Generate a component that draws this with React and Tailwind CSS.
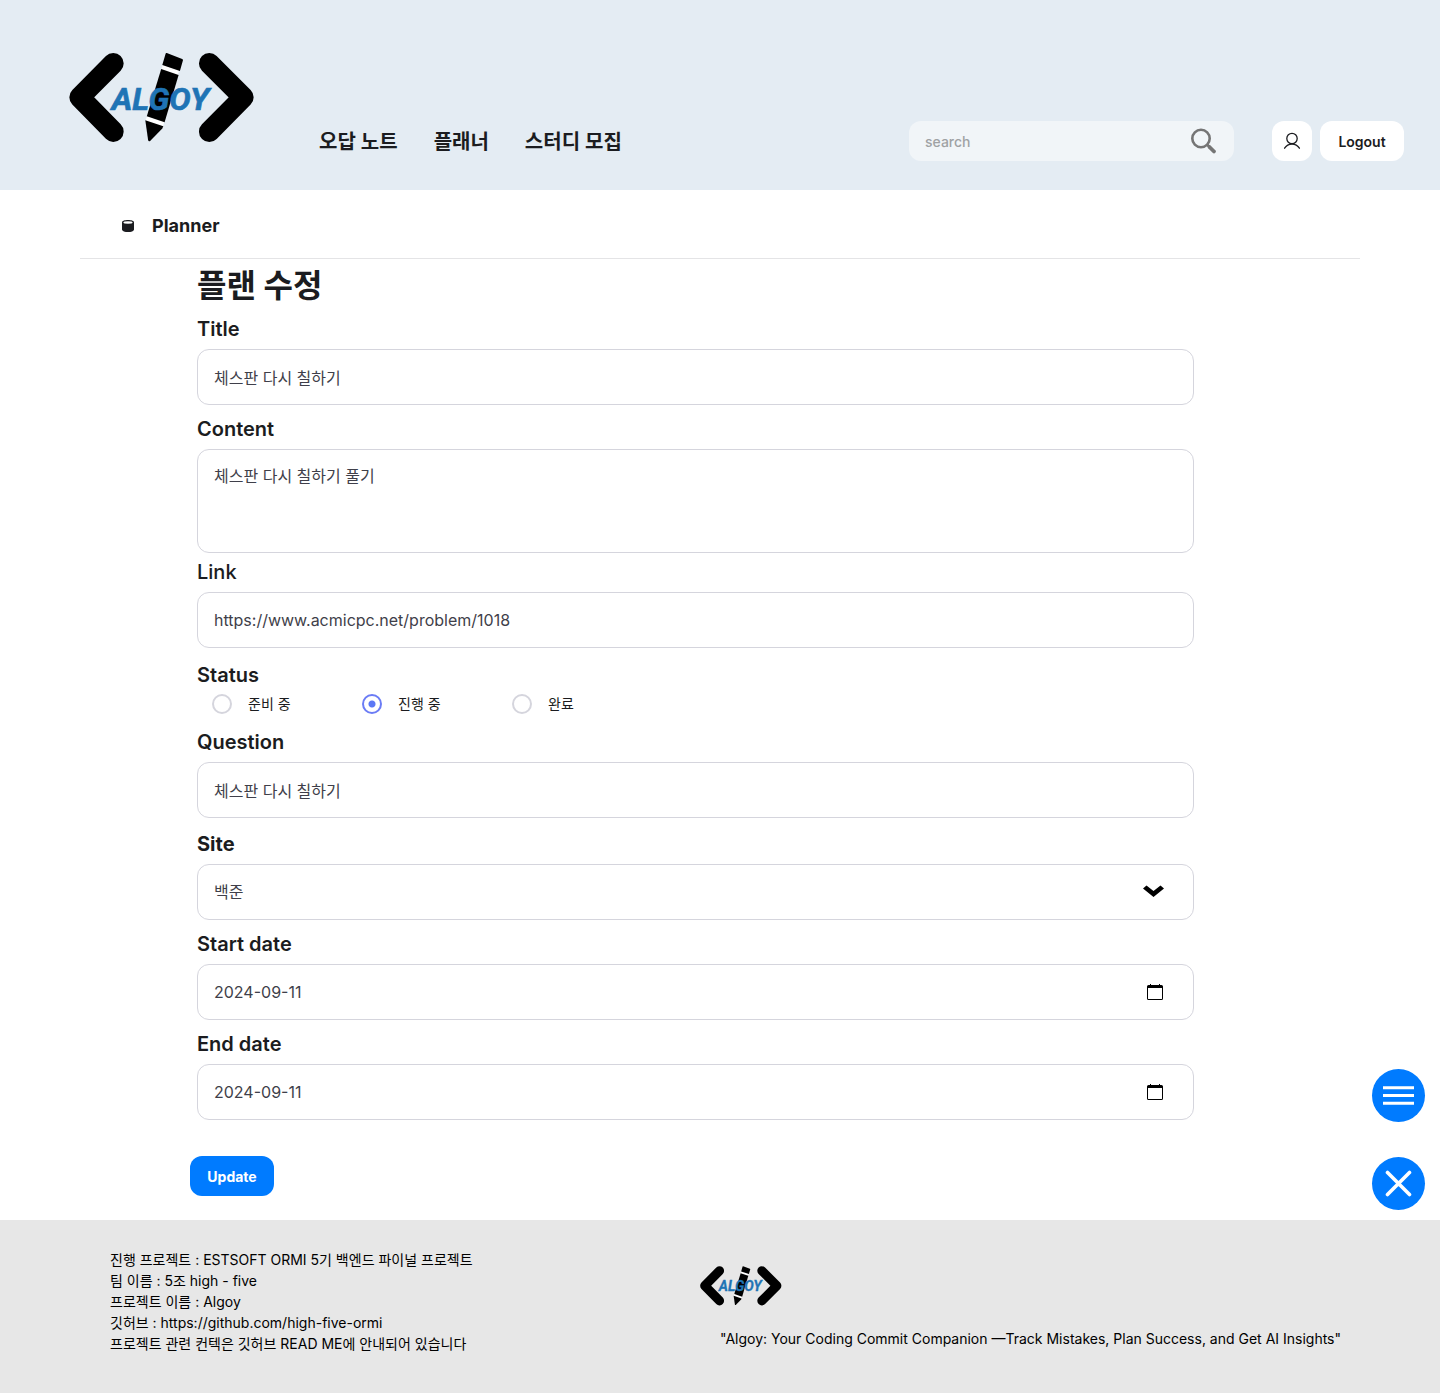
import React from "react";

const inputBase =
  "block w-full rounded-xl border border-[#d5d5dd] bg-white px-4 text-base leading-6 text-[#3f3f4a] outline-none focus:border-[#5c73f2]";

function Logo({ className }) {
  return (
    <svg viewBox="0 0 186 90" className={className} role="img" aria-label="Algoy">
      <g transform="translate(-9 -13)">
        <g fill="none" stroke="#000" strokeWidth="20.7" strokeLinecap="round" strokeLinejoin="round">
          <path d="M53.3 23.4 19.7 57.3l33.6 34.3" />
          <path d="M149.3 23.4l34 33.9-34 34.3" />
        </g>
        <path d="M106 14.500 122 20 103 86 90 100 86 79.5Z" fill="#fff" />
        <path d="M106.8 13q-.9-.2-1.200.8L102.300 25l17.600 6 3-10.600q.3-1-.7-1.400Z" />
        <path d="M101.200 29l17.400 6-14 47.300-17.800-6Z" />
        <path d="M85.300 80.200l18 6-1 2.200-12.200 12.500q-1.600.8-2-1Z" />
        <text
          x="51.500"
          y="70.200"
          fontFamily="Roboto, sans-serif"
          fontSize="32"
          fontWeight="700"
          fontStyle="italic"
          fill="#1f74b5"
          stroke="#1f74b5"
          strokeWidth="0.6"
        >
          ALGOY
        </text>
      </g>
    </svg>
  );
}

function CalendarIcon() {
  return (
    <svg viewBox="0 0 16 16" className="size-4" aria-hidden="true">
      <path d="M3 0h1v1h8V0h1v1h1.500A1.500 1.500 0 0 1 16 2.500v12a1.500 1.500 0 0 1-1.500 1.500h-13A1.500 1.500 0 0 1 0 14.500v-12A1.500 1.500 0 0 1 1.500 1H3ZM1 4v10.500a.5.5 0 0 0 .5.5h13a.5.5 0 0 0 .5-.5V4Z" />
    </svg>
  );
}

function Field({ id, label, className, weight = "font-semibold", children }) {
  return (
    <div className={className}>
      <label htmlFor={id} className={`mb-1.5 block text-xl leading-7 ${weight}`}>
        {label}
      </label>
      {children}
    </div>
  );
}

function DateInput({ id }) {
  return (
    <div className="relative">
      <input id={id} type="text" defaultValue="2024-09-11" className={`${inputBase} h-14`} />
      <button
        type="button"
        aria-label="Open calendar"
        className="absolute inset-y-0 right-[31px] flex items-center"
      >
        <CalendarIcon />
      </button>
    </div>
  );
}

function StatusOption({ id, label, defaultChecked }) {
  return (
    <label htmlFor={id} className="flex w-[150px] items-center gap-4 text-sm leading-5">
      <input
        id={id}
        type="radio"
        name="status"
        defaultChecked={defaultChecked}
        className="size-5 appearance-none rounded-full border-2 border-[#d5d5dd] bg-white checked:border-[#6b7cf5] checked:bg-[radial-gradient(circle,#5c78f5_0_3px,white_4px)]"
      />
      {label}
    </label>
  );
}

export default function App() {
  return (
    <div className="flex min-h-screen flex-col bg-white font-[Inter,'Noto_Sans_CJK_KR',sans-serif] text-[#1b1c20]">
      <header className="flex h-[190px] items-start bg-[#e4ecf3] pr-9 pl-[69px]">
        <a href="#home" className="mt-[53px] shrink-0">
          <Logo className="h-[90px] w-[186px]" />
        </a>
        <nav className="mt-32 ml-16 flex gap-9 text-xl leading-7 font-semibold whitespace-nowrap">
          <a href="#notes">오답 노트</a>
          <a href="#planner">플래너</a>
          <a href="#study">스터디 모집</a>
        </nav>
        <form className="mt-[121px] ml-auto flex h-10 w-[325px] items-center rounded-xl bg-[#f1f5f8] px-4">
          <input
            type="search"
            aria-label="search"
            placeholder="search"
            className="min-w-0 flex-1 bg-transparent pt-0.5 text-sm leading-5 font-medium outline-none placeholder:text-[#9fa2a4]"
          />
          <button type="button" aria-label="Submit search">
            <svg viewBox="0 0 28 28" className="size-7" fill="none" stroke="#757575" strokeLinecap="round">
              <circle cx="11" cy="11.500" r="8.700" strokeWidth="2.600" />
              <path d="M17.500 18l1.500 1.500" strokeWidth="2.600" />
              <path d="M19.500 20l4.500 4.500" strokeWidth="3.800" />
            </svg>
          </button>
        </form>
        <div className="mt-[121px] ml-[38px] flex gap-2">
          <button
            type="button"
            aria-label="Profile"
            className="flex size-10 items-center justify-center rounded-xl bg-white"
          >
            <svg viewBox="0 0 20 20" className="size-5" fill="none" stroke="#1b1c20" strokeWidth="1.300" strokeLinecap="round">
              <circle cx="10" cy="7.500" r="5.200" />
              <path d="M2.600 17.200a8.700 8.700 0 0 1 14.800 0" />
            </svg>
          </button>
          <button type="button" className="h-10 w-[84px] rounded-xl bg-white pt-0.5 text-sm leading-5 font-semibold">
            Logout
          </button>
        </div>
      </header>

      <main className="relative flex-1 pb-6">
        <div className="mx-20 flex h-[69px] items-center gap-4 border-b border-[#e4e4e6] pt-1 pl-10">
          <svg viewBox="0 0 16 16" className="size-4" aria-hidden="true">
            <path d="M2 4.500C2 1.300 14 1.300 14 4.500v7c0 3.400-12 3.400-12 0Z" fill="#1b1c20" />
            <ellipse cx="8" cy="4.500" rx="4.600" ry="1.200" fill="#fff" />
          </svg>
          <h2 className="text-lg leading-7 font-bold">Planner</h2>
        </div>

        <form className="mr-[246px] ml-[197px]">
          <h1 className="pt-[7px] pb-[9px] text-[32px] leading-10 font-bold">플랜 수정</h1>

          <Field id="title" label="Title">
            <input id="title" type="text" defaultValue="체스판 다시 칠하기" className={`${inputBase} h-14`} />
          </Field>
          <Field id="content" label="Content" className="mt-2.5">
            <textarea
              id="content"
              defaultValue="체스판 다시 칠하기 풀기"
              className={`${inputBase} h-[104px] resize-none py-3.5`}
            />
          </Field>
          <Field id="link" label="Link" weight="font-medium" className="mt-[5px]">
            <input
              id="link"
              type="text"
              defaultValue="https://www.acmicpc.net/problem/1018"
              className={`${inputBase} h-14`}
            />
          </Field>

          <fieldset className="mt-[13px]">
            <legend className="mb-[5px] text-xl leading-7 font-semibold">Status</legend>
            <div className="flex pl-[15px]">
              <StatusOption id="ready" label="준비 중" />
              <StatusOption id="progress" label="진행 중" defaultChecked />
              <StatusOption id="done" label="완료" />
            </div>
          </fieldset>

          <Field id="question" label="Question" className="mt-3.5">
            <input id="question" type="text" defaultValue="체스판 다시 칠하기" className={`${inputBase} h-14`} />
          </Field>
          <Field id="site" label="Site" weight="font-bold" className="mt-3">
            <div className="relative">
              <select id="site" className={`${inputBase} h-14 appearance-none`}>
                <option>백준</option>
                <option>프로그래머스</option>
              </select>
              <svg
                viewBox="0 0 22 12"
                className="pointer-events-none absolute top-[21px] right-[29px] h-3 w-[22px]"
                aria-hidden="true"
              >
                <path d="M0 3.500 3.500.6 10.500 6 17.500.6 21 3.500 10.500 12Z" />
              </svg>
            </div>
          </Field>
          <Field id="start" label="Start date" className="mt-2.5">
            <DateInput id="start" />
          </Field>
          <Field id="end" label="End date" className="mt-2.5">
            <DateInput id="end" />
          </Field>

          <button
            type="submit"
            className="mt-9 -ml-[7px] h-10 w-[84px] rounded-xl bg-[#007bff] pt-0.5 text-sm leading-5 font-bold text-white"
          >
            Update
          </button>
        </form>

        <div className="absolute right-[15px] bottom-2.5 flex flex-col gap-[35px]">
          <button
            type="button"
            aria-label="Menu"
            className="flex size-[53px] items-center justify-center rounded-full bg-[#007bff]"
          >
            <svg viewBox="0 0 31 19" className="h-[19px] w-[31px]" stroke="#fff" strokeWidth="3">
              <path d="M0 1.700h31M0 9.500h31M0 17.300h31" />
            </svg>
          </button>
          <button
            type="button"
            aria-label="Close"
            className="flex size-[53px] items-center justify-center rounded-full bg-[#007bff]"
          >
            <svg viewBox="0 0 27 27" className="size-[27px]" stroke="#fff" strokeWidth="3.600" strokeLinecap="round">
              <path d="M2.500 2.500l22 22M24.500 2.500l-22 22" />
            </svg>
          </button>
        </div>
      </main>

      <footer className="flex h-[173px] bg-[#e7e7e7] pl-[110px] text-sm leading-[21px] text-black">
        <div className="w-[586px] shrink-0 pt-[29px]">
          <p>진행 프로젝트 : ESTSOFT ORMI 5기 백엔드 파이널 프로젝트</p>
          <p>팀 이름 : 5조 high - five</p>
          <p>프로젝트 이름 : Algoy</p>
          <p>
            깃허브 : <a href="https://github.com/high-five-ormi">https://github.com/high-five-ormi</a>
          </p>
          <p>프로젝트 관련 컨텍은 깃허브 READ ME에 안내되어 있습니다</p>
        </div>
        <div className="pt-[46px] pl-1">
          <Logo className="h-10 w-[82px]" />
          <p className="mt-[22px] ml-5 whitespace-nowrap">
            "Algoy: Your Coding Commit Companion —Track Mistakes, Plan Success, and Get AI Insights"
          </p>
        </div>
      </footer>
    </div>
  );
}
